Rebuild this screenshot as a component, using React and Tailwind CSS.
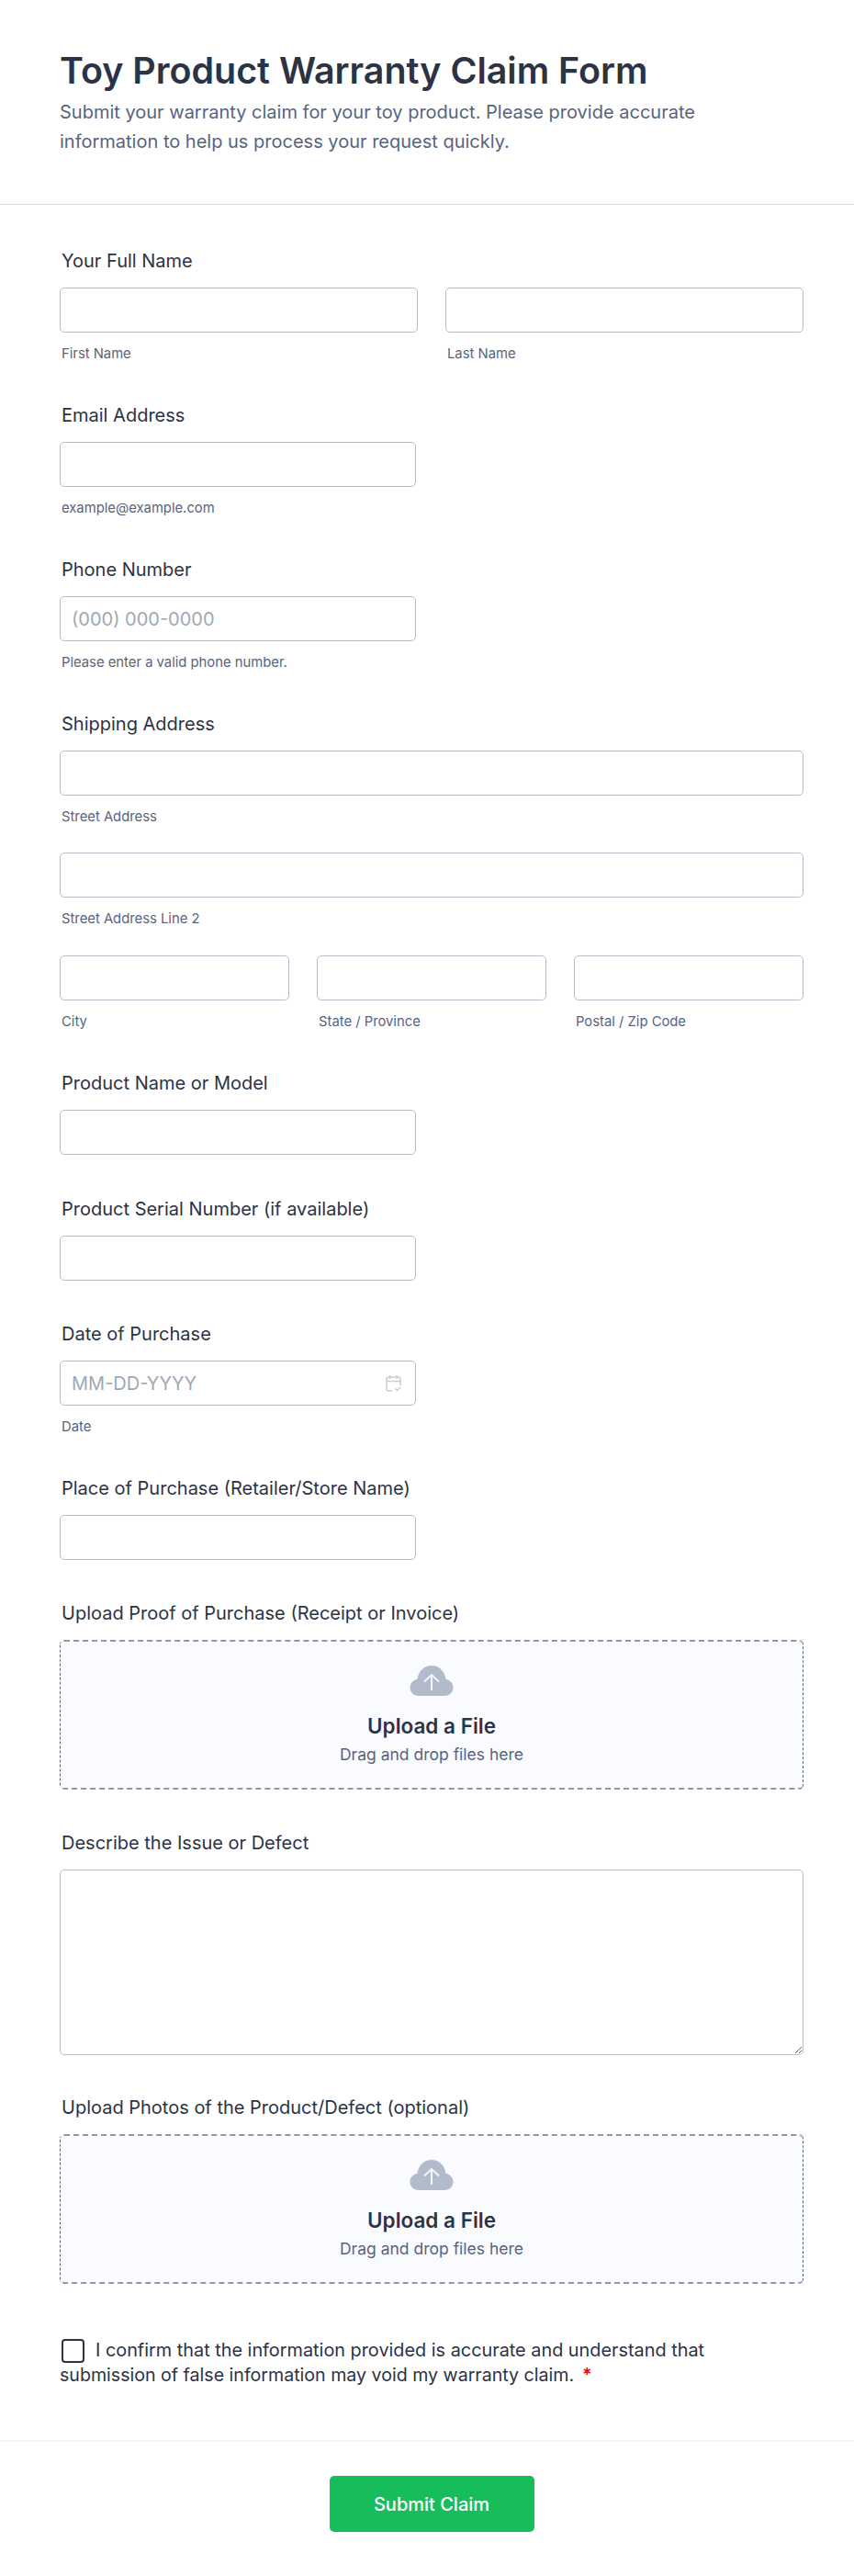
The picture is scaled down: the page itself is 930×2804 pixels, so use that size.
import { useState } from "react";

const FONT = "font-['Inter','Liberation_Sans',sans-serif]";

function Field({ label, children, className = "" }) {
  return (
    <div className={`pb-[44px] ${className}`}>
      <label className="block w-fit mb-[14px] pl-[2px] text-[20px] leading-[30px] font-normal text-[#2c3345]">{label}</label>
      {children}
    </div>
  );
}

function Input({ placeholder, className = "" }) {
  return (
    <input
      placeholder={placeholder}
      className={`block h-[49px] w-full px-3 rounded-[5px] border border-[#b8bdc9] bg-white text-[20px] text-[#2c3345] placeholder:text-[#a0a8b4] outline-none ${className}`}
    />
  );
}

function Sub({ children }) {
  return <div className="mt-[13px] pl-[2px] h-[20px] text-[14.800px] leading-[20px] text-[#57647e]">{children}</div>;
}

function Upload() {
  return (
    <div className="flex h-[163px] flex-col items-center rounded-[5px] border-x border-y-2 border-dashed border-x-[#57647e] border-y-[#9297a8] bg-[#fafbff] pt-[25px]">
      <svg width="48" height="36" viewBox="0 0 48 36">
        <path d="M10 34C4.500 34 0.500 30 0.500 25c0-4.600 3.400-8.400 8-9C9.600 7 16 1 24 1s14.400 6 15.500 15c4.600.600 8 4.400 8 9 0 5-4 9-9.500 9Z" fill="#b1bbcc" />
        <path d="M24 28V11M16 18.500 24 11l8 7.500" fill="none" stroke="#f3f5f9" strokeWidth="2" />
      </svg>
      <div className="mt-[15px] text-[22.500px] leading-[32px] font-semibold text-[#2c3345]">Upload a File</div>
      <div className="mt-[2px] text-[17.500px] leading-[26px] text-[#57647e]">Drag and drop files here</div>
    </div>
  );
}

export default function App() {
  const [agree, setAgree] = useState(false);

  return (
    <div className={`w-[930px] min-h-[2804px] bg-white ${FONT}`}>
      {/* Header */}
      <div className="h-[222px] pl-[65px] pr-[65px] pt-[51px]">
        <h1 className="text-[39.400px] leading-[52px] font-semibold text-[#2c3345]">Toy Product Warranty Claim Form</h1>
        <p className="mt-[3px] text-[20px] leading-[32px] text-[#57647e]">
          Submit your warranty claim for your toy product. Please provide accurate information to help us process your request quickly.
        </p>
      </div>

      {/* Fields */}
      <div className="border-t border-[#d8dae3] pl-[65px] pr-[55px] pt-[46px]">
        <Field label="Your Full Name" className="!pb-[42px]">
          <div className="grid grid-cols-2 gap-[30px]">
            <div><Input /><Sub>First Name</Sub></div>
            <div><Input /><Sub>Last Name</Sub></div>
          </div>
        </Field>
        <Field label="Email Address" className="!pb-[42px]">
          <Input className="!w-[388px]" />
          <Sub>example@example.com</Sub>
        </Field>
        <Field label="Phone Number" className="!pb-[42px]">
          <Input className="!w-[388px]" placeholder="(000) 000-0000" />
          <Sub>Please enter a valid phone number.</Sub>
        </Field>
        <Field label="Shipping Address" className="!pb-[42px]">
          <Input />
          <Sub>Street Address</Sub>
          <Input className="mt-[29px]" />
          <Sub>Street Address Line 2</Sub>
          <div className="mt-[30px] grid grid-cols-3 gap-[30px]">
            <div><Input /><Sub>City</Sub></div>
            <div><Input /><Sub>State / Province</Sub></div>
            <div><Input /><Sub>Postal / Zip Code</Sub></div>
          </div>
        </Field>
        <Field label="Product Name or Model">
          <Input className="!w-[388px]" />
        </Field>
        <Field label="Product Serial Number (if available)" className="!pb-[43px]">
          <Input className="!w-[388px]" />
        </Field>
        <Field label="Date of Purchase" className="!pb-[42px]">
          <div className="relative w-[388px]">
            <Input placeholder="MM-DD-YYYY" />
            <svg className="absolute right-[16px] top-[15px]" width="17" height="19" viewBox="0 0 17 19" fill="none" stroke="#c9cdd6" strokeWidth="1.500">
              <path d="M7 18H3a2 2 0 0 1-2-2V5a2 2 0 0 1 2-2h11a2 2 0 0 1 2 2v7M1 7.500h15M5 1v4M12 1v4M10.500 15.500l2 2 3.500-3.500" />
            </svg>
          </div>
          <Sub>Date</Sub>
        </Field>
        <Field label="Place of Purchase (Retailer/Store Name)" className="!pb-[43px]">
          <Input className="!w-[388px]" />
        </Field>
        <Field label="Upload Proof of Purchase (Receipt or Invoice)" className="!pb-[43px]">
          <Upload />
        </Field>
        <Field label="Describe the Issue or Defect" className="!pb-[42px]">
          <textarea className="block h-[202px] w-full rounded-[5px] border border-[#b8bdc9] bg-white p-3 outline-none" />
        </Field>
        <Field label="Upload Photos of the Product/Defect (optional)" className="!pb-[59px]">
          <Upload />
        </Field>

        {/* Confirmation */}
        <div className="h-[111px] leading-[27px] text-[#2c3345]">
          <div className="flex items-center text-[19.850px]">
            <button
              type="button"
              onClick={() => setAgree(!agree)}
              className="mr-[12px] ml-[2px] h-[26px] w-[25px] rounded-[4px] border-2 border-[#2c3345] bg-white"
            >
              {agree && <span className="block text-center text-[14px] leading-[22px]">✓</span>}
            </button>
            <span>I confirm that the information provided is accurate and understand that</span>
          </div>
          <div className="text-[19.600px]">
            <span>submission of false information may void my warranty claim.</span>
            <span className="ml-[9px] font-semibold text-[#ff0000]">*</span>
          </div>
        </div>
      </div>

      {/* Submit */}
      <div className="flex justify-center border-t-2 border-[#f3f3fe] pt-[37px]">
        <button type="button" className="ml-[10px] h-[61px] w-[223px] rounded-[5px] bg-[#18bd5b] text-[20px] font-medium text-white">
          Submit Claim
        </button>
      </div>
    </div>
  );
}
